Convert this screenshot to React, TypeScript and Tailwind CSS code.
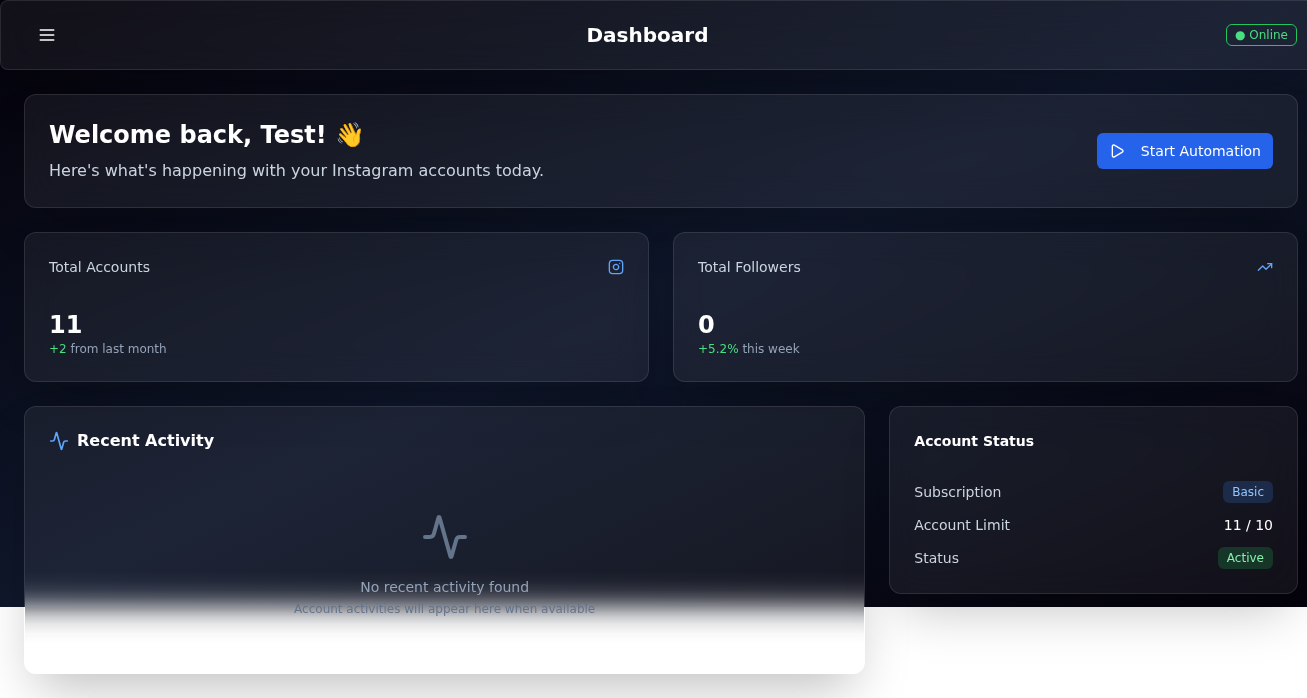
import type { ReactNode } from 'react';
import { Activity, Instagram, Play, TrendingUp } from 'lucide-react';

const panel = 'border border-white/10 bg-white/6 shadow-[0_25px_50px_-12px_rgba(0,0,0,0.25)]';
const glass = `${panel} backdrop-blur-lg`;

function MenuIcon() {
  return (
    <svg
      className="size-5"
      viewBox="0 0 24 24"
      fill="none"
      stroke="currentColor"
      strokeWidth="2"
      strokeLinecap="round"
      aria-hidden="true"
    >
      <path d="M4 6h16M4 12h16M4 18h16" />
    </svg>
  );
}

function Card({ className = '', children }: { className?: string; children: ReactNode }) {
  return <section className={`rounded-xl p-6 ${glass} ${className}`}>{children}</section>;
}

interface StatProps {
  label: string;
  value: string;
  delta: string;
  period: string;
  icon: ReactNode;
}

function StatCard({ label, value, delta, period, icon }: StatProps) {
  return (
    <Card className="flex flex-col gap-8">
      <div className="flex items-center justify-between">
        <h3 className="text-sm text-[#cbd5e1]">{label}</h3>
        {icon}
      </div>
      <div>
        <div className="text-2xl font-bold text-white">{value}</div>
        <p className="text-xs text-[#94a3b8]">
          <span className="text-[#4ade80]">{delta}</span> {period}
        </p>
      </div>
    </Card>
  );
}

function StatusRow({ label, children }: { label: string; children: ReactNode }) {
  return (
    <div className="flex items-center justify-between">
      <dt className="text-[#cbd5e1]">{label}</dt>
      <dd className="text-white">{children}</dd>
    </div>
  );
}

function EdgeHaze() {
  return (
    <div
      aria-hidden="true"
      className="absolute inset-x-0 bottom-[30px] flex h-[72px] flex-col"
    >
      <div className="flex-1 bg-[linear-gradient(to_bottom,rgba(255,255,255,0)_0px,rgba(255,255,255,0.03)_10px,rgba(255,255,255,0.11)_19px,rgba(255,255,255,0.23)_26px,rgba(255,255,255,0.36)_31px,rgba(255,255,255,0.5)_36px)]" />
      <div className="flex-1 bg-[linear-gradient(to_bottom,rgba(26,29,42,0.5)_0px,rgba(26,29,42,0.36)_5px,rgba(26,29,42,0.23)_10px,rgba(26,29,42,0.11)_17px,rgba(26,29,42,0.03)_26px,rgba(26,29,42,0)_36px)]" />
    </div>
  );
}

const badge = 'block rounded-md border px-2 py-0.5 text-xs';

export default function App() {
  return (
    <div className="min-h-screen overflow-x-clip bg-white font-['DejaVu_Sans','Noto_Color_Emoji',sans-serif]">
      <div className="h-[calc(100vh-91px)] bg-[linear-gradient(to_bottom_right,#04020a,#0f172a,#04020a)]">
        <div className="w-[calc(100%+15px)]">
          <header className={`flex items-center justify-between rounded-lg px-6 py-4 ${glass}`}>
            <button
              type="button"
              aria-label="Toggle menu"
              className="flex h-9 items-center rounded-md px-3 text-white"
            >
              <MenuIcon />
            </button>
            <h1 className="text-xl font-bold text-white">Dashboard</h1>
            <span className={`${badge} border-[#22c55e] text-[#4ade80]`}>● Online</span>
          </header>

          <main className="flex flex-col gap-6 p-6">
            <Card className="flex items-center justify-between">
              <div>
                <h2 className="mb-2 text-2xl font-bold text-white">Welcome back, Test! 👋</h2>
                <p className="text-base text-[#cbd5e1]">
                  Here's what's happening with your Instagram accounts today.
                </p>
              </div>
              <button
                type="button"
                className="flex h-9 items-center gap-4 rounded-md bg-[#2563eb] px-3 text-sm text-white"
              >
                <Play className="size-4" />
                Start Automation
              </button>
            </Card>

            <div className="grid grid-cols-2 gap-6">
              <StatCard
                label="Total Accounts"
                value="11"
                delta="+2"
                period="from last month"
                icon={<Instagram className="size-4 text-[#60a5fa]" />}
              />
              <StatCard
                label="Total Followers"
                value="0"
                delta="+5.2%"
                period="this week"
                icon={<TrendingUp className="size-4 text-[#60a5fa]" />}
              />
            </div>

            <div className="grid grid-cols-3 items-start gap-6">
              <section className={`relative col-span-2 rounded-xl p-6 ${panel}`}>
                <EdgeHaze />
                <div className="relative flex flex-col gap-[30px]">
                  <h3 className="flex h-5 items-center gap-2 text-base font-bold text-white">
                    <Activity className="size-5 text-[#60a5fa]" />
                    Recent Activity
                  </h3>
                  <div className="flex flex-col items-center py-8">
                    <Activity className="mb-4 size-12 text-[#64748b]" />
                    <p className="text-sm text-[#94a3b8]">No recent activity found</p>
                    <p className="mt-1 text-xs text-[#64748b]">
                      Account activities will appear here when available
                    </p>
                  </div>
                </div>
              </section>

              <Card className="flex flex-col gap-[30px]">
                <h3 className="text-sm font-bold text-white">Account Status</h3>
                <dl className="flex flex-col gap-3 text-sm">
                  <StatusRow label="Subscription">
                    <span className={`${badge} border-transparent bg-[#3b82f6]/20 text-[#93c5fd]`}>
                      Basic
                    </span>
                  </StatusRow>
                  <StatusRow label="Account Limit">11 / 10</StatusRow>
                  <StatusRow label="Status">
                    <span className={`${badge} border-transparent bg-[#22c55e]/20 text-[#86efac]`}>
                      Active
                    </span>
                  </StatusRow>
                </dl>
              </Card>
            </div>
          </main>
        </div>
      </div>
    </div>
  );
}
